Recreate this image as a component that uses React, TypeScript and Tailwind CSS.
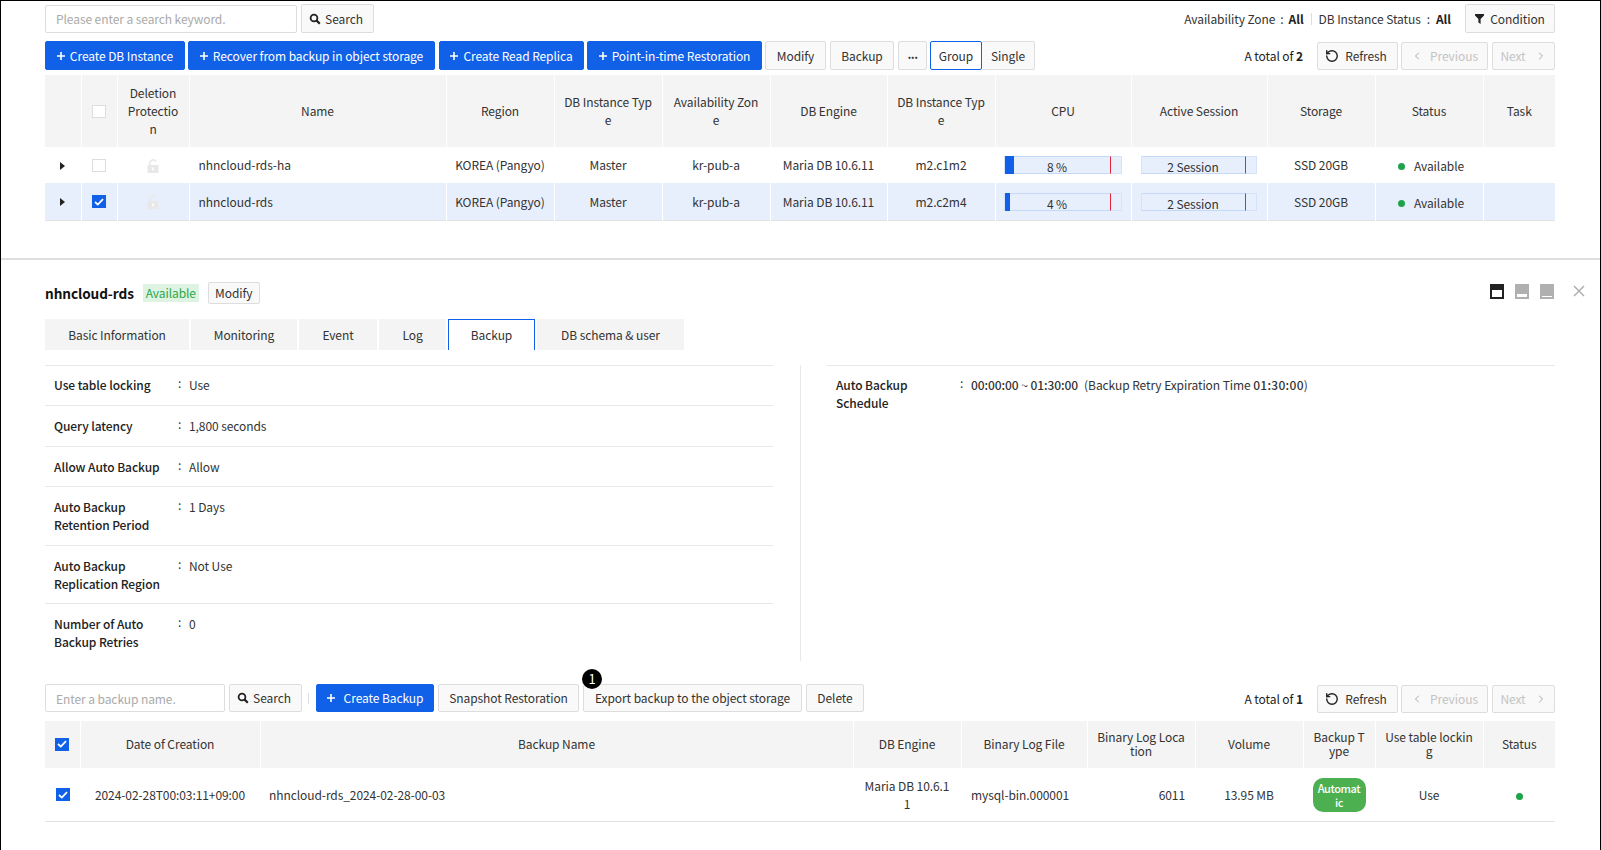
import React from "react";
import { RotateCcw, ChevronLeft, ChevronRight } from "lucide-react";

const SearchIcon = () => (
  <svg width="12" height="12" viewBox="0 0 12 12" className="shrink-0">
    <circle cx="5" cy="5" r="3.4" fill="none" stroke="#222" strokeWidth="1.8" />
    <path d="M7.4 7.4 L10.8 10.8" stroke="#222" strokeWidth="2.2" />
  </svg>
);
const Plus = () => (
  <svg width="8" height="8" viewBox="0 0 8 8" className="shrink-0">
    <path d="M4 0v8M0 4h8" stroke="#fff" strokeWidth="1.6" />
  </svg>
);
const Funnel = () => (
  <svg width="9" height="10" viewBox="0 0 9 10" className="shrink-0">
    <path d="M0 0h9v1.4L5.6 5v5L3.4 8.6V5L0 1.4z" fill="#222" />
  </svg>
);
const Lock = () => (
  <svg width="12" height="14" viewBox="0 0 12 14" className="inline-block align-middle -translate-y-px">
    <path d="M2 7V4a4 4 0 0 1 7.6-1.6L8.2 3.1A2.4 2.4 0 0 0 3.6 4v3z" fill="#e8e8e8" />
    <rect x="0.5" y="6" width="11" height="8" fill="#e8e8e8" />
    <rect x="5" y="8.5" width="2" height="3" fill="#fafafa" />
  </svg>
);
const Caret = () => (
  <svg width="5" height="8" viewBox="0 0 5 8" className="inline-block -translate-y-px">
    <path d="M0 0l5 4-5 4z" fill="#222" />
  </svg>
);

const Check = ({ on }: { on?: boolean }) =>
  on ? (
    <span className="inline-flex items-center justify-center w-[14px] h-[13px] bg-[#1160e8] align-middle -translate-y-px">
      <svg width="10" height="8" viewBox="0 0 10 8">
        <path d="M1 4l2.8 2.6L9 1.2" fill="none" stroke="#fff" strokeWidth="1.8" />
      </svg>
    </span>
  ) : (
    <span className="inline-block w-[14px] h-[13px] bg-white border border-[#ddd] align-middle -translate-y-px" />
  );

const base =
  "inline-flex items-center justify-center shrink-0 border rounded-[2px] text-[12px] whitespace-nowrap";
const Btn = ({ className = "", children }: { className?: string; children: React.ReactNode }) => (
  <button className={`${base} border-[#ddd] bg-[#f9f9f9] ${className}`}>{children}</button>
);
const Blue = ({ className = "", children }: { className?: string; children: React.ReactNode }) => (
  <button className={`${base} border-[#1160e8] bg-[#1160e8] text-white ${className}`}>
    {children}
  </button>
);

const Pager = ({ total }: { total: number }) => (
  <div className="ml-auto flex items-center">
    <span className="text-[12px] text-[#222] mr-[14px]">
      A total of <b>{total}</b>
    </span>
    <Btn className="h-[28px] w-[81px] gap-[6px] pr-[3px] text-[#333]">
      <RotateCcw size={14} strokeWidth={2.4} color="#222" />
      Refresh
    </Btn>
    <Btn className="h-[28px] w-[87px] ml-[3px] gap-[7px] text-[#c4c4c4]">
      <ChevronLeft size={12} color="#aaa" />
      Previous
    </Btn>
    <Btn className="h-[28px] w-[63px] ml-[4px] gap-[9px] text-[#c4c4c4]">
      Next
      <ChevronRight size={12} color="#aaa" />
    </Btn>
  </div>
);

const Meter = ({ fill, text, fillCls }: { fill?: boolean; text: string; fillCls?: string }) => (
  <div className="flex h-[18px] bg-[#e8effc] border border-[#d5e3fa] text-[12px] text-[#333]">
    <div className="relative flex-1 border-y border-[#c4d9f8] -my-px border-r border-r-[#e0263c]">
      {fill && <div className={`absolute left-0 -top-px -bottom-px bg-[#1160e8] ${fillCls}`} />}
      <div className="text-center leading-[20px]">{text}</div>
    </div>
    <div className="w-[10px]" />
  </div>
);

const thC = "bg-[#f4f4f4] border-r border-white last:border-r-0 font-normal text-[#333] text-center break-all px-[9px]";

const topCols = ["w-[36px]","w-[36px]","w-[72px]","w-[257px]","w-[108px]","w-[108px]","w-[108px]","w-[117px]","w-[108px]","w-[136px]","w-[136px]","w-[108px]","w-[108px]","w-[72px]"];
const topHead = ["", "", "Deletion Protection", "Name", "Region", "DB Instance Type", "Availability Zone", "DB Engine", "DB Instance Type", "CPU", "Active Session", "Storage", "Status", "Task"];

const rows = [
  { name: "nhncloud-rds-ha", type: "m2.c1m2", cpu: "8 %", w: "w-[9px]", sel: false },
  { name: "nhncloud-rds", type: "m2.c2m4", cpu: "4 %", w: "w-[5px]", sel: true },
];

const td = "text-center text-[#333] border-r last:border-r-0";

const botCols = ["w-[35px]","w-[180px]","w-[593px]","w-[108px]","w-[126px]","w-[108px]","w-[108px]","w-[72px]","w-[108px]","w-[72px]"];
const botHead = ["", "Date of Creation", "Backup Name", "DB Engine", "Binary Log File", "Binary Log Location", "Volume", "Backup Type", "Use table locking", "Status"];

const Info = ({ label, value, cls }: { label: string; value: React.ReactNode; cls: string }) => (
  <div className={`flex border-t border-[#e8e8e8] px-[9px] text-[12px] leading-[18px] ${cls}`}>
    <div className="w-[124px] shrink-0 pr-[8px] font-medium text-[#222]">{label}</div>
    <div className="w-[11px] shrink-0 -mt-[2px] text-[#333]">:</div>
    <div className="text-[#333]">{value}</div>
  </div>
);

const Tab = ({ children, on, className }: { children: string; on?: boolean; className: string }) => (
  <div
    className={`h-[31px] flex items-center justify-center text-[12px] text-[#333] ${className} ${
      on ? "bg-white border border-b-0 border-[#1160e8]" : "bg-[#f4f4f4]"
    }`}
  >
    {children}
  </div>
);

const ViewIcon = ({ dark, bar }: { dark?: boolean; bar: string }) => (
  <div className={`w-[14px] h-[15px] flex flex-col justify-end items-center pb-[2px] ${dark ? "bg-[#222]" : "bg-[#b0b0b0]"}`}>
    <div className={`w-[10px] bg-white ${bar}`} />
  </div>
);

export default function App() {
  return (
    <div
      className="w-[1601px] h-[850px] overflow-hidden bg-white border-x border-t border-black tracking-[-0.08px]"
      style={{ fontFamily: '"Noto Sans CJK KR", "Noto Sans", sans-serif' }}
    >
      <section className="h-[257px] pl-[44px] pr-[45px]">
        <div className="flex items-center pt-[3px]">
          <input
            readOnly
            placeholder="Please enter a search keyword."
            className="w-[252px] h-[28px] border border-[#ddd] rounded-[2px] px-[10px] text-[12px] placeholder:text-[#aaa] outline-none"
          />
          <Btn className="w-[73px] h-[29px] ml-[4px] gap-[4px] pr-[3px] text-[#333]">
            <SearchIcon />
            Search
          </Btn>
          <div className="ml-auto flex items-center text-[12px] text-[#333]">
            <span>Availability Zone</span>
            <span className="mx-[5px]">:</span>
            <b className="text-[#222]">All</b>
            <span className="w-px h-[12px] bg-[#ddd] mx-[7px]" />
            <span>DB Instance Status</span>
            <span className="mx-[6px]">:</span>
            <b className="text-[#222]">All</b>
            <Btn className="w-[90px] h-[29px] ml-[14px] gap-[6px]">
              <Funnel />
              Condition
            </Btn>
          </div>
        </div>

        <div className="flex items-center mt-[8px]">
          <Blue className="w-[140px] h-[29px] gap-[5px]"><Plus />Create DB Instance</Blue>
          <Blue className="w-[247px] h-[29px] ml-[3px] gap-[5px]"><Plus />Recover from backup in object storage</Blue>
          <Blue className="w-[145px] h-[29px] ml-[4px] gap-[5px]"><Plus />Create Read Replica</Blue>
          <Blue className="w-[175px] h-[29px] ml-[3px] gap-[5px]"><Plus />Point-in-time Restoration</Blue>
          <Btn className="w-[61px] h-[29px] ml-[3px] text-[#333]">Modify</Btn>
          <Btn className="w-[64px] h-[29px] ml-[4px] text-[#333]">Backup</Btn>
          <Btn className="w-[29px] h-[29px] ml-[4px] text-[#333]">
            <span className="font-bold leading-none -mt-[4px] tracking-[-0.5px]">...</span>
          </Btn>
          <button className={`${base} w-[52px] h-[29px] ml-[3px] border-[#1160e8] bg-white text-[#333]`}>Group</button>
          <Btn className="w-[53px] h-[29px] border-l-0 text-[#333]">Single</Btn>
          <Pager total={2} />
        </div>

        <table className="table-fixed w-[1510px] mt-[5px] border-collapse text-[12px] leading-[18px]">
          <colgroup>
            {topCols.map((c, i) => (
              <col key={i} className={c} />
            ))}
          </colgroup>
          <thead>
            <tr className="h-[72px]">
              {topHead.map((h, i) => (
                <th key={i} className={thC}>
                  {i === 1 ? <Check /> : h}
                </th>
              ))}
            </tr>
          </thead>
          <tbody>
            {rows.map((r) => {
              const b = r.sel ? "border-white" : "border-transparent";
              const p = r.sel ? "pt-[2px]" : "";
              return (
                <tr key={r.name} className={r.sel ? "h-[37px] bg-[#e8effc] border-b border-[#e2e2e2]" : "h-[36px]"}>
                  <td className={`${td} ${b}`}><Caret /></td>
                  <td className={`${td} ${b}`}><Check on={r.sel} /></td>
                  <td className={`${td} ${b}`}><Lock /></td>
                  <td className={`${td} ${b} ${p} text-left pl-[9px]`}>{r.name}</td>
                  <td className={`${td} ${b} ${p}`}>KOREA (Pangyo)</td>
                  <td className={`${td} ${b} ${p}`}>Master</td>
                  <td className={`${td} ${b} ${p}`}>kr-pub-a</td>
                  <td className={`${td} ${b} ${p}`}>Maria DB 10.6.11</td>
                  <td className={`${td} ${b} ${p}`}>{r.type}</td>
                  <td className={`${td} ${b} ${p} pl-[8px] pr-[9px]`}><Meter fill fillCls={r.w} text={r.cpu} /></td>
                  <td className={`${td} ${b} ${p} pl-[9px] pr-[10px]`}><Meter text="2 Session" /></td>
                  <td className={`${td} ${b} ${p}`}>SSD 20GB</td>
                  <td className={`${td} ${b} ${p}`}>
                    <span className="inline-flex items-center gap-[9px] pt-[2px] ml-[4px]">
                      <span className="w-[7px] h-[7px] rounded-full bg-[#1fa34a]" />
                      Available
                    </span>
                  </td>
                  <td className={td} />
                </tr>
              );
            })}
          </tbody>
        </table>
      </section>

      <div className="h-[2px] bg-[#dedede]" />

      <section className="pl-[44px] pr-[45px] pt-[22px]">
        <div className="flex items-center h-[22px] -mr-[30px]">
          <span className="text-[13.6px] font-bold text-[#111]">nhncloud-rds</span>
          <span className="ml-[9px] h-[18px] w-[56px] bg-[#dff3e3] text-[#2aa84a] text-[12px] flex items-center justify-center">Available</span>
          <Btn className="ml-[9px] w-[52px] h-[22px] text-[#333]">Modify</Btn>
          <div className="ml-auto flex items-center gap-[11px] -mt-[4px]">
            <ViewIcon dark bar="h-[7px]" />
            <ViewIcon bar="h-[3px]" />
            <ViewIcon bar="h-px" />
            <svg width="12" height="12" viewBox="0 0 12 12" className="ml-[8px]">
              <path d="M1 1l10 10M11 1L1 11" stroke="#aaa" strokeWidth="1.4" />
            </svg>
          </div>
        </div>

        <div className="flex gap-[2px] mt-[15px]">
          <Tab className="w-[144px]">Basic Information</Tab>
          <Tab className="w-[106px]">Monitoring</Tab>
          <Tab className="w-[78px]">Event</Tab>
          <Tab className="w-[67px]">Log</Tab>
          <Tab on className="w-[87px]">Backup</Tab>
          <Tab className="w-[147px]">DB schema &amp; user</Tab>
        </div>

        <div className="flex mt-[15px] h-[296px]">
          <div className="w-[728px] shrink-0">
            <Info cls="h-[40px] pt-[10px]" label="Use table locking" value="Use" />
            <Info cls="h-[41px] pt-[11px]" label="Query latency" value="1,800 seconds" />
            <Info cls="h-[40px] pt-[11px]" label="Allow Auto Backup" value="Allow" />
            <Info cls="h-[59px] pt-[11px]" label="Auto Backup Retention Period" value="1 Days" />
            <Info cls="h-[58px] pt-[11px]" label="Auto Backup Replication Region" value="Not Use" />
            <Info cls="h-[58px] pt-[11px]" label="Number of Auto Backup Retries" value="0" />
          </div>
          <div className="w-px ml-[27px] bg-[#e8e8e8]" />
          <div className="flex-1 ml-[26px]">
            <Info
              cls="h-[59px] pt-[10px]"
              label="Auto Backup Schedule"
              value={
                <>
                  <span className="font-medium">00:00:00 ~ 01:30:00</span>
                  <span className="ml-[6px]">(Backup Retry Expiration Time</span>{" "}
                  <span className="font-medium tracking-[0.3px]">01:30:00</span>)
                </>
              }
            />
          </div>
        </div>

        <div className="flex items-start mt-[23px] h-[28px]">
          <input
            readOnly
            placeholder="Enter a backup name."
            className="w-[180px] h-[28px] border border-[#ddd] rounded-[2px] px-[10px] text-[12px] placeholder:text-[#aaa] outline-none"
          />
          <Btn className="w-[73px] h-[28px] ml-[4px] gap-[4px] pr-[3px] text-[#333]">
            <SearchIcon />
            Search
          </Btn>
          <span className="w-px h-[11px] bg-[#ddd] ml-[6px] mr-[7px] mt-[9px]" />
          <Blue className="w-[118px] h-[28px] gap-[9px]"><Plus />Create Backup</Blue>
          <Btn className="w-[141px] h-[28px] ml-[4px] text-[#333]">Snapshot Restoration</Btn>
          <div className="relative ml-[4px]">
            <Btn className="w-[219px] h-[28px] text-[#333]">Export backup to the object storage</Btn>
            <span className="absolute -top-[15px] -left-[1px] w-[20px] h-[20px] rounded-full bg-black text-white text-[13px] leading-[20px] text-center">
              1
            </span>
          </div>
          <Btn className="w-[58px] h-[28px] ml-[4px] text-[#333]">Delete</Btn>
          <div className="ml-auto mt-px flex">
            <Pager total={1} />
          </div>
        </div>

        <table className="table-fixed w-[1510px] mt-[9px] border-collapse text-[12px] leading-[18px]">
          <colgroup>
            {botCols.map((c, i) => (
              <col key={i} className={c} />
            ))}
          </colgroup>
          <thead>
            <tr className="h-[47px] leading-[14px]">
              {botHead.map((h, i) => (
                <th key={i} className={`${thC} pb-[1px]`}>
                  {i === 0 ? <Check on /> : h}
                </th>
              ))}
            </tr>
          </thead>
          <tbody>
            <tr className="h-[53px] border-b border-[#e2e2e2]">
              <td className="text-center"><Check on /></td>
              <td className="pt-px text-center text-[#333]">2024-02-28T00:03:11+09:00</td>
              <td className="pt-px px-[9px] text-[#333]">nhncloud-rds_2024-02-28-00-03</td>
              <td className="pt-px px-[10px] text-center break-all text-[#333]">Maria DB 10.6.11</td>
              <td className="pt-px pl-[10px] text-[#333]">mysql-bin.000001</td>
              <td className="pt-px px-[10px] text-right text-[#333]">6011</td>
              <td className="pt-px text-center text-[#333]">13.95 MB</td>
              <td className="pt-px text-center">
                <span className="inline-block w-[53px] h-[34px] px-[5px] rounded-[10px] bg-[#4caf50] text-white text-[11px] tracking-[-0.4px] font-medium leading-[14px] pt-[3px] break-all align-middle">
                  Automatic
                </span>
              </td>
              <td className="pt-px text-center text-[#333]">Use</td>
              <td className="pt-px text-center">
                <span className="inline-block w-[7px] h-[7px] rounded-full bg-[#1fa34a]" />
              </td>
            </tr>
          </tbody>
        </table>
      </section>
    </div>
  );
}
